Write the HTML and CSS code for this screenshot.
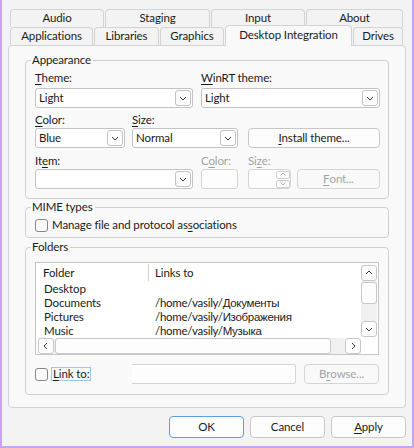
FILE: index.html
```html
<!DOCTYPE html>
<html>
<head>
<meta charset="utf-8">
<link rel="stylesheet" href="styles.css">
</head>
<body>
<div class="window">
  <div class="tabbar">
    <div class="tabrow">
      <div class="tab w-audio">Audio</div>
      <div class="tab w-staging">Staging</div>
      <div class="tab w-input">Input</div>
      <div class="tab w-about">About</div>
    </div>
    <div class="tabrow">
      <div class="tab w-apps">Applications</div>
      <div class="tab w-libs">Libraries</div>
      <div class="tab w-gfx">Graphics</div>
      <div class="tab w-desk selected">Desktop Integration</div>
      <div class="tab w-drives">Drives</div>
    </div>
  </div>

  <div class="pane">
    <div class="group appearance">
      <span class="group-title">Appearance</span>
      <div class="app-grid">
        <label class="lbl c-theme-l"><u>T</u>heme:</label>
        <label class="lbl c-winrt-l"><u>W</u>inRT theme:</label>
        <div class="combo c-theme"><span class="val">Light</span><span class="drop"><svg width="16" height="16" viewBox="0 0 16 16"><polyline points="5,7 8,10 11,7" fill="none" stroke="#3c3c3c" stroke-width="1"/></svg></span></div>
        <div class="combo c-winrt"><span class="val">Light</span><span class="drop"><svg width="16" height="16" viewBox="0 0 16 16"><polyline points="5,7 8,10 11,7" fill="none" stroke="#3c3c3c" stroke-width="1"/></svg></span></div>

        <label class="lbl r3 c-color-l"><u>C</u>olor:</label>
        <label class="lbl r3 c-size-l"><u>S</u>ize:</label>
        <div class="combo c-color"><span class="val">Blue</span><span class="drop"><svg width="16" height="16" viewBox="0 0 16 16"><polyline points="5,7 8,10 11,7" fill="none" stroke="#3c3c3c" stroke-width="1"/></svg></span></div>
        <div class="combo c-size"><span class="val">Normal</span><span class="drop"><svg width="16" height="16" viewBox="0 0 16 16"><polyline points="5,7 8,10 11,7" fill="none" stroke="#3c3c3c" stroke-width="1"/></svg></span></div>
        <div class="btn c-install"><u>I</u>nstall theme...</div>

        <label class="lbl r5 c-item-l">It<u>e</u>m:</label>
        <label class="lbl r5 dis c-color2-l">C<u>o</u>lor:</label>
        <label class="lbl r5 dis c-size2-l">Si<u>z</u>e:</label>
        <div class="combo c-item"><span class="val"></span><span class="drop"><svg width="16" height="16" viewBox="0 0 16 16"><polyline points="5,7 8,10 11,7" fill="none" stroke="#3c3c3c" stroke-width="1"/></svg></span></div>
        <div class="field c-colorbox"></div>
        <div class="field spin c-spin">
          <span class="spin-btns">
            <span class="sbtn"><svg width="12" height="7" viewBox="0 0 12 7"><polyline points="3.5,4.5 6,2 8.5,4.5" fill="none" stroke="#b5b5b5" stroke-width="1"/></svg></span>
            <span class="sbtn"><svg width="12" height="7" viewBox="0 0 12 7"><polyline points="3.5,2.5 6,5 8.5,2.5" fill="none" stroke="#b5b5b5" stroke-width="1"/></svg></span>
          </span>
        </div>
        <div class="btn disabled c-font"><u>F</u>ont...</div>
      </div>
    </div>

    <div class="group mime">
      <span class="group-title">MIME types</span>
      <div class="check-row">
        <span class="checkbox"></span>
        <span class="check-label">Manage file and protocol as<u>s</u>ociations</span>
      </div>
    </div>

    <div class="group folders">
      <span class="group-title">Folders</span>
      <div class="tree">
        <div class="tree-body">
          <div class="tree-head">
            <span class="col1 head-cell">Folder</span>
            <span class="col2">Links to</span>
          </div>
          <div class="tree-row"><span class="col1">Desktop</span><span class="col2"></span></div>
          <div class="tree-row"><span class="col1">Documents</span><span class="col2">/home/vasily/<span class="cyr">Документы</span></span></div>
          <div class="tree-row"><span class="col1">Pictures</span><span class="col2">/home/vasily/<span class="cyr">Изображения</span></span></div>
          <div class="tree-row"><span class="col1">Music</span><span class="col2">/home/vasily/<span class="cyr">Музыка</span></span></div>
        </div>
        <div class="vscroll">
          <span class="sb-btn"><svg width="14" height="14" viewBox="0 0 14 14"><polyline points="4,8 7,5 10,8" fill="none" stroke="#3c3c3c" stroke-width="1"/></svg></span>
          <span class="sb-groove v"><span class="sb-handle v"></span></span>
          <span class="sb-btn"><svg width="14" height="14" viewBox="0 0 14 14"><polyline points="4,6 7,9 10,6" fill="none" stroke="#3c3c3c" stroke-width="1"/></svg></span>
        </div>
        <div class="hscroll">
          <span class="sb-btn"><svg width="14" height="14" viewBox="0 0 14 14"><polyline points="8,4 5,7 8,10" fill="none" stroke="#3c3c3c" stroke-width="1"/></svg></span>
          <span class="sb-groove h"><span class="sb-handle h"></span></span>
          <span class="sb-btn"><svg width="14" height="14" viewBox="0 0 14 14"><polyline points="6,4 9,7 6,10" fill="none" stroke="#3c3c3c" stroke-width="1"/></svg></span>
        </div>
        <div class="corner"></div>
      </div>
      <div class="link-row">
        <span class="checkbox"></span>
        <span class="focus-label"><u>L</u>ink to:</span>
        <div class="field link-input"></div>
        <div class="btn disabled browse">B<u>r</u>owse...</div>
      </div>
    </div>
  </div>

  <div class="buttons">
    <div class="btn dlg default">OK</div>
    <div class="btn dlg">Cancel</div>
    <div class="btn dlg"><u>A</u>pply</div>
  </div>
</div>
</body>
</html>
```

FILE: styles.css
```css
* { box-sizing: border-box; }
html, body { margin: 0; padding: 0; }
body {
  font-family: Lato, "Liberation Sans", sans-serif;
  font-size: 11.5px;
  letter-spacing: -0.12px;
  line-height: 16px;
  color: #1b1b1b;
  background: #f3f3f3;
}
u { text-decoration: underline; text-underline-offset: 2px; text-decoration-thickness: 1px; }
.cyr { font-family: "Liberation Sans", Arial, sans-serif; font-size: 11.5px; letter-spacing: -0.3px; }

.window {
  width: 414px;
  height: 448px;
  background: #f3f3f3;
  border-left: 2px solid #c7a4f1;
  border-right: 2px solid #c7a4f1;
  border-bottom: 2px solid #c7a4f1;
  padding: 9px 6px 8px 6px;
  display: flex;
  flex-direction: column;
}

/* tabs */
.tabbar { margin: 0 3px 0 2px; display: flex; flex-direction: column; }
.tabrow { display: flex; gap: 1px; height: 18px; }
.tab {
  height: 18px;
  border: 1px solid #d3d3d3;
  border-bottom: none;
  border-radius: 4px 4px 0 0;
  background: #f3f3f3;
  display: flex;
  align-items: center;
  justify-content: center;
  white-space: nowrap;
  padding-bottom: 1px;
}
.tab.selected {
  height: 21px;
  margin-top: -2px;
  margin-bottom: -1px;
  background: #f9f9f9;
  position: relative;
  z-index: 2;
  padding-bottom: 3px;
}
.w-audio { width: 94px; }
.w-staging { width: 105px; }
.w-input { width: 94px; }
.w-about { width: 97px; }
.w-apps { width: 83px; }
.w-libs { width: 65px; }
.w-gfx { width: 64px; }
.w-desk { width: 127px; }
.w-drives { width: 50px; }

.pane {
  flex: 1;
  background: #f9f9f9;
  border: 1px solid #d3d3d3;
  border-radius: 4px;
  padding: 14px 16px 0 16px;
  display: flex;
  flex-direction: column;
  position: relative;
  z-index: 1;
}

.group {
  position: relative;
  border: 1px solid #d0d0d0;
  border-radius: 4px;
}
.group-title {
  position: absolute;
  top: -9px;
  left: 5px;
  padding: 0 2px 0 1px;
  background: #f9f9f9;
  line-height: 16px;
}

/* appearance */
.appearance { padding: 9px 9px 8px 9px; height: 139px; }
.app-grid {
  display: grid;
  grid-template-columns: 90px 7px 61px 8px 37px 10px 43px 6px 83px;
  grid-template-rows: 18px 20px 20px 20px 21px 20px;
}
.lbl { white-space: nowrap; line-height: 16px; align-self: start; }
.lbl.r3, .lbl.r5 { align-self: end; }
.dis { color: #a3a3a3; }
.c-theme-l { grid-column: 1; grid-row: 1; }
.c-winrt-l { grid-column: 5 / 10; grid-row: 1; }
.c-theme { grid-column: 1 / 4; grid-row: 2; }
.c-winrt { grid-column: 5 / 10; grid-row: 2; }
.c-color-l { grid-column: 1; grid-row: 3; }
.c-size-l { grid-column: 3 / 6; grid-row: 3; }
.c-color { grid-column: 1; grid-row: 4; }
.c-size { grid-column: 3 / 6; grid-row: 4; }
.c-install { grid-column: 7 / 10; grid-row: 4; }
.c-item-l { grid-column: 1; grid-row: 5; }
.c-color2-l { grid-column: 5 / 7; grid-row: 5; }
.c-size2-l { grid-column: 7 / 9; grid-row: 5; }
.c-item { grid-column: 1 / 4; grid-row: 6; }
.c-colorbox { grid-column: 5; grid-row: 6; }
.c-spin { grid-column: 7; grid-row: 6; }
.c-font { grid-column: 9; grid-row: 6; }

.combo {
  height: 20px;
  background: #ffffff;
  border: 1px solid #c3c3c3;
  border-radius: 3px;
  display: flex;
  align-items: center;
  justify-content: space-between;
  padding: 0 1px 0 3px;
}
.combo .val { white-space: nowrap; }
.drop {
  width: 16px;
  height: 16px;
  border: 1px solid #c3c3c3;
  border-radius: 3px;
  background: #fdfdfd;
  display: flex;
  align-items: center;
  justify-content: center;
}
.drop svg { display: block; flex: none; }

.field {
  height: 20px;
  background: #fdfdfd;
  border: 1px solid #d5d5d5;
  border-radius: 3px;
}
.spin { display: flex; justify-content: flex-end; }
.spin-btns { display: flex; flex-direction: column; gap: 1px; justify-content: center; }
.sbtn {
  width: 14px;
  height: 8px;
  border: 1px solid #d0d0d0;
  border-radius: 2px;
  background: #fcfcfc;
  display: flex;
  align-items: center;
  justify-content: center;
}
.sbtn svg { display: block; flex: none; }

.btn {
  height: 20px;
  background: #fdfdfd;
  border: 1px solid #c8c8c8;
  border-radius: 4px;
  display: flex;
  align-items: center;
  justify-content: center;
  white-space: nowrap;
}
.btn.disabled { color: #a3a3a3; background: #f9f9f9; border-color: #d5d5d5; }

/* mime */
.mime { margin-top: 8px; height: 31px; padding: 9px 9px 3px 9px; }
.check-row { display: flex; align-items: center; height: 16px; }
.checkbox {
  width: 13px;
  height: 13px;
  border: 1px solid #878787;
  border-radius: 3px;
  background: #fbfbfb;
  flex: none;
}
.check-label { margin-left: 4px; white-space: nowrap; }

/* folders */
.folders { margin-top: 9px; height: 148px; padding: 14px 9px 9px 9px; }
.tree {
  height: 93px;
  border: 1px solid #c6c6c6;
  background: #ffffff;
  display: grid;
  grid-template-columns: 1fr 16px;
  grid-template-rows: 1fr 17px;
  padding-right: 1px;
  overflow: hidden;
}
.tree-body { overflow: hidden; }
.tree-head { display: flex; height: 19px; align-items: center; }
.tree-head .col1 { padding-left: 7px; }
.head-cell { border-right: 1px solid #d3d3d3; height: 17px; line-height: 17px; }
.tree-head .col2 { padding-left: 6px; }
.tree-row { display: flex; height: 14px; line-height: 14px; }
.col1 { width: 113px; flex: none; padding-left: 8px; white-space: nowrap; }
.tree-row .col2 { padding-left: 6px; white-space: nowrap; letter-spacing: -0.3px; }

.vscroll { display: flex; flex-direction: column; padding-top: 2px; background: #fcfcfc; }
.hscroll { display: flex; flex-direction: row; padding: 1px 0 0 2px; background: #fcfcfc; }
.corner { background: #ffffff; }
.sb-btn {
  width: 16px;
  height: 16px;
  flex: none;
  border: 1px solid #c8c8c8;
  border-radius: 3px;
  background: #fdfdfd;
  display: flex;
  align-items: center;
  justify-content: center;
}
.sb-btn svg { display: block; flex: none; }
.sb-groove { flex: 1; background: #f0f0f0; display: flex; }
.sb-groove.v { flex-direction: column; padding-top: 1px; }
.sb-groove.h { padding-left: 1px; }
.sb-handle { border: 1px solid #c8c8c8; border-radius: 3px; background: #fdfdfd; }
.sb-handle.v { height: 22px; width: 16px; }
.sb-handle.h { width: 276px; height: 16px; }

.link-row { display: flex; align-items: center; height: 20px; margin-top: 9px; }
.focus-label {
  margin-left: 3px;
  border: 1px solid #9cc8ee;
  padding: 0 1px 0 1px;
  line-height: 12px;
  height: 14px;
  white-space: nowrap;
}
.link-input {
  margin-left: auto;
  width: 164px;
  border-left: none;
  border-radius: 0 3px 3px 0;
}
.browse { margin-left: 8px; width: 75px; }

.buttons { display: flex; justify-content: flex-end; gap: 6px; margin-top: 8px; }
.btn.dlg { width: 75px; height: 22px; }
.btn.default { border-color: #5b9fe3; }
```
